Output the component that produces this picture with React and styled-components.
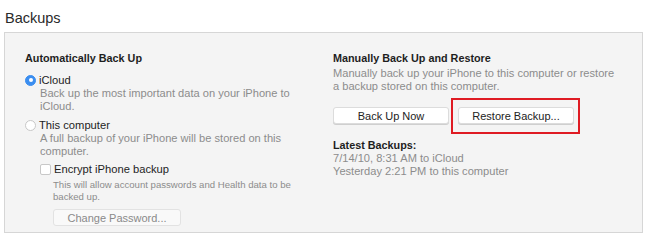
import styled, { createGlobalStyle } from "styled-components";

const GlobalStyle = createGlobalStyle`
  html, body {
    margin: 0;
    padding: 0;
    background: #ffffff;
    font-family: "Liberation Sans", Arial, sans-serif;
  }
`;

const Page = styled.div`
  width: 652px;
  height: 237px;
  box-sizing: border-box;
  padding: 10px 9px 0 4px;
  display: flex;
  flex-direction: column;
`;

const Title = styled.div`
  font-size: 14.5px;
  color: #2a2a2a;
  margin-left: 1px;
  height: 22px;
`;

const Panel = styled.div`
  display: flex;
  height: 201px;
  box-sizing: border-box;
  background: #f4f4f4;
  border: 1px solid #d6d6d6;
  padding: 19px 0 0 20px;
`;

const Column = styled.div`
  display: flex;
  flex-direction: column;
  width: ${({ $width }) => $width}px;
`;

const Heading = styled.div`
  font-size: 10.8px;
  font-weight: 700;
  color: #1e1e1e;
  line-height: 13px;
  margin-top: ${({ $top }) => $top || 0}px;
`;

const OptionRow = styled.div`
  display: flex;
  align-items: center;
  gap: 3px;
  font-size: 11.2px;
  color: #1e1e1e;
  line-height: 14px;
  margin-top: ${({ $top }) => $top || 0}px;
  margin-left: ${({ $left }) => $left || 0}px;
`;

const Radio = styled.span`
  width: 11px;
  height: 11px;
  border-radius: 50%;
  box-sizing: border-box;
  background: ${({ $on }) => ($on ? "#3b8ef0" : "#ffffff")};
  border: 1px solid ${({ $on }) => ($on ? "#3b8ef0" : "#c8c8c8")};
  display: flex;
  align-items: center;
  justify-content: center;
  &::after {
    content: "";
    width: 4px;
    height: 4px;
    border-radius: 50%;
    background: #ffffff;
    display: ${({ $on }) => ($on ? "block" : "none")};
  }
`;

const Checkbox = styled.span`
  width: 11px;
  height: 11px;
  box-sizing: border-box;
  border-radius: 2px;
  background: #ffffff;
  border: 1px solid #c8c8c8;
`;

const Desc = styled.div`
  font-size: ${({ $small }) => ($small ? 9.6 : 11.1)}px;
  line-height: ${({ $small }) => ($small ? 12 : 13)}px;
  color: #8c8c8c;
  margin-left: ${({ $left }) => $left || 0}px;
  margin-top: ${({ $top }) => $top || 0}px;
  width: ${({ $width }) => $width}px;
`;

const ButtonRow = styled.div`
  display: flex;
  gap: 9px;
  margin-top: 14px;
`;

const Button = styled.div`
  width: ${({ $width }) => $width}px;
  height: 17px;
  box-sizing: border-box;
  display: flex;
  align-items: center;
  justify-content: center;
  background: #ffffff;
  border: 1px solid #dcdcdc;
  border-radius: 3px;
  font-size: 11px;
  color: #222;
  margin-left: ${({ $left }) => $left || 0}px;
  margin-top: ${({ $top }) => $top || 0}px;
  box-shadow: 0 1px 0 #cfcfcf;
`;

const DisabledButton = styled(Button)`
  background: #f9f9f9;
  color: #8a8a8a;
  border-color: #e2e2e2;
  box-shadow: none;
`;

const Highlight = styled.div`
  position: relative;
  &::before {
    content: "";
    position: absolute;
    left: -7px;
    top: -9px;
    width: 129px;
    height: 36px;
    box-sizing: border-box;
    border: 2px solid #df1b23;
  }
`;

export default function App() {
  return (
    <>
      <GlobalStyle />
      <Page>
        <Title>Backups</Title>
        <Panel>
          <Column $width={308}>
            <Heading>Automatically Back Up</Heading>
            <OptionRow $top={8}>
              <Radio $on />
              iCloud
            </OptionRow>
            <Desc $left={15} $width={262}>
              Back up the most important data on your iPhone to iCloud.
            </Desc>
            <OptionRow $top={5}>
              <Radio />
              This computer
            </OptionRow>
            <Desc $left={15} $width={262}>
              A full backup of your iPhone will be stored on this computer.
            </Desc>
            <OptionRow $left={15} $top={4}>
              <Checkbox />
              Encrypt iPhone backup
            </OptionRow>
            <Desc $small $left={28} $top={3} $width={240}>
              This will allow account passwords and Health data to be backed up.
            </Desc>
            <DisabledButton $width={128} $left={28} $top={6}>
              Change Password...
            </DisabledButton>
          </Column>
          <Column $width={300}>
            <Heading>Manually Back Up and Restore</Heading>
            <Desc $width={282} $top={2}>
              Manually back up your iPhone to this computer or restore a backup
              stored on this computer.
            </Desc>
            <ButtonRow>
              <Button $width={116}>Back Up Now</Button>
              <Highlight>
                <Button $width={116}>Restore Backup...</Button>
              </Highlight>
            </ButtonRow>
            <Heading $top={15}>Latest Backups:</Heading>
            <Desc>7/14/10, 8:31 AM to iCloud</Desc>
            <Desc>Yesterday 2:21 PM to this computer</Desc>
          </Column>
        </Panel>
      </Page>
    </>
  );
}
